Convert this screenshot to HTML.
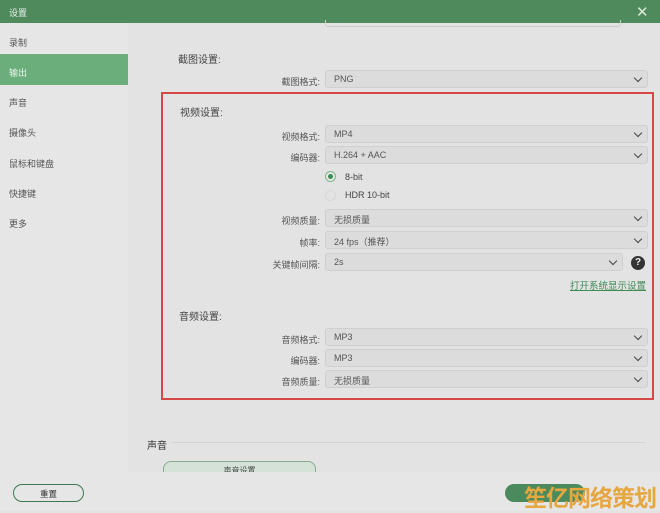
<!DOCTYPE html>
<html><head><meta charset="utf-8"><style>
*{margin:0;padding:0;box-sizing:border-box}
body{width:660px;height:511px;overflow:hidden;background:#e3e3e3;font-family:"Liberation Sans","Noto Sans CJK SC",sans-serif;position:relative;color:#444}
.a{position:absolute}
.title{left:0;top:0;width:660px;height:23px;background:#4f8a5d;color:#e8f3ea;font-size:9px;padding:6px 0 0 9px}
.side{left:0;top:23px;width:128px;height:449px;background:#e6e6e6}
.nav{left:9px;font-size:9px;color:#555}
.sel{left:0;top:54px;width:128px;height:31px;background:#6bae7b}
.lbl{font-size:9px;color:#555;text-align:right;width:120px;left:200px}
.dd{left:325px;width:323px;height:18px;background:#dcdcdc;border:1px solid #cfcfcf;border-radius:3px;font-size:9px;color:#555;padding:3px 0 0 8px}
.dd:after{content:"";position:absolute;right:6px;top:4px;width:5px;height:5px;border-right:1.5px solid #444;border-bottom:1.5px solid #444;transform:rotate(45deg)}
.h{font-size:10px;color:#444}
</style></head><body>
<div class="a title">设置</div>
<div class="a" style="left:636px;top:3px;color:#d8eadc;font-size:15px">✕</div>
<div class="a side"></div>
<div class="a sel"></div>
<div class="a nav" style="top:36px">录制</div>
<div class="a nav" style="top:66px;color:#e8f5ea">输出</div>
<div class="a nav" style="top:96px">声音</div>
<div class="a nav" style="top:126px">摄像头</div>
<div class="a nav" style="top:157px">鼠标和键盘</div>
<div class="a nav" style="top:187px">快捷键</div>
<div class="a nav" style="top:217px">更多</div>
<div class="a" style="left:325px;top:20px;width:296px;height:7px;border:1px solid #ccc;border-top:none;border-radius:0 0 3px 3px"></div>
<div class="a h" style="left:178px;top:51px">截图设置:</div>
<div class="a lbl" style="top:75px">截图格式:</div>
<div class="a dd" style="top:70px">PNG</div>
<div class="a" style="left:161px;top:92px;width:493px;height:308px;border:2px solid #d54848"></div>
<div class="a h" style="left:180px;top:104px">视频设置:</div>
<div class="a lbl" style="top:130px">视频格式:</div>
<div class="a dd" style="top:125px">MP4</div>
<div class="a lbl" style="top:151px">编码器:</div>
<div class="a dd" style="top:146px">H.264 + AAC</div>
<div class="a" style="left:325px;top:171px;width:11px;height:11px;border-radius:50%;border:1px solid #7bb58a;background:#e8e8e8"><div style="margin:2px;width:5px;height:5px;border-radius:50%;background:#3e8a55"></div></div>
<div class="a" style="left:345px;top:172px;font-size:9px">8-bit</div>
<div class="a" style="left:325px;top:190px;width:11px;height:11px;border-radius:50%;border:1px solid #d8d8d8"></div>
<div class="a" style="left:345px;top:190px;font-size:9px">HDR 10-bit</div>
<div class="a lbl" style="top:214px">视频质量:</div>
<div class="a dd" style="top:209px">无损质量</div>
<div class="a lbl" style="top:236px">帧率:</div>
<div class="a dd" style="top:231px">24 fps（推荐）</div>
<div class="a lbl" style="top:258px">关键帧间隔:</div>
<div class="a dd" style="top:253px;width:298px">2s</div>
<div class="a" style="left:631px;top:256px;width:14px;height:14px;border-radius:50%;background:#333;color:#eee;font-size:10px;font-weight:bold;text-align:center;line-height:14px">?</div>
<div class="a" style="left:566px;top:278px;width:80px;text-align:right;font-size:9.5px;color:#3d8a55;text-decoration:underline;white-space:nowrap">打开系统显示设置</div>
<div class="a h" style="left:179px;top:308px">音频设置:</div>
<div class="a lbl" style="top:333px">音频格式:</div>
<div class="a dd" style="top:328px">MP3</div>
<div class="a lbl" style="top:354px">编码器:</div>
<div class="a dd" style="top:349px">MP3</div>
<div class="a lbl" style="top:375px">音频质量:</div>
<div class="a dd" style="top:370px">无损质量</div>
<div class="a" style="left:147px;top:437px;font-size:10px;color:#333">声音</div>
<div class="a" style="left:172px;top:442px;width:473px;height:1px;background:#d2d2d2"></div>
<div class="a" style="left:163px;top:461px;width:153px;height:20px;border:1px solid #8aa890;border-radius:8px;background:#d4e2d7;font-size:8px;text-align:center;padding-top:3px">声音设置</div>
<div class="a" style="left:0;top:472px;width:660px;height:39px;background:#e6e6e6"></div>
<div class="a" style="left:13px;top:484px;width:71px;height:18px;border:1.5px solid #3e7a50;border-radius:9px;font-size:8.5px;text-align:center;padding-top:3px;color:#333">重置</div>
<div class="a" style="left:505px;top:484px;width:80px;height:18px;background:#4a8a5c;border-radius:9px"></div>
<div class="a" style="left:524px;top:481px;font-size:23px;font-weight:bold;color:#e6a640;letter-spacing:-1px;font-family:'Noto Sans CJK SC',sans-serif;line-height:30px">笙亿网络策划</div>
</body></html>
